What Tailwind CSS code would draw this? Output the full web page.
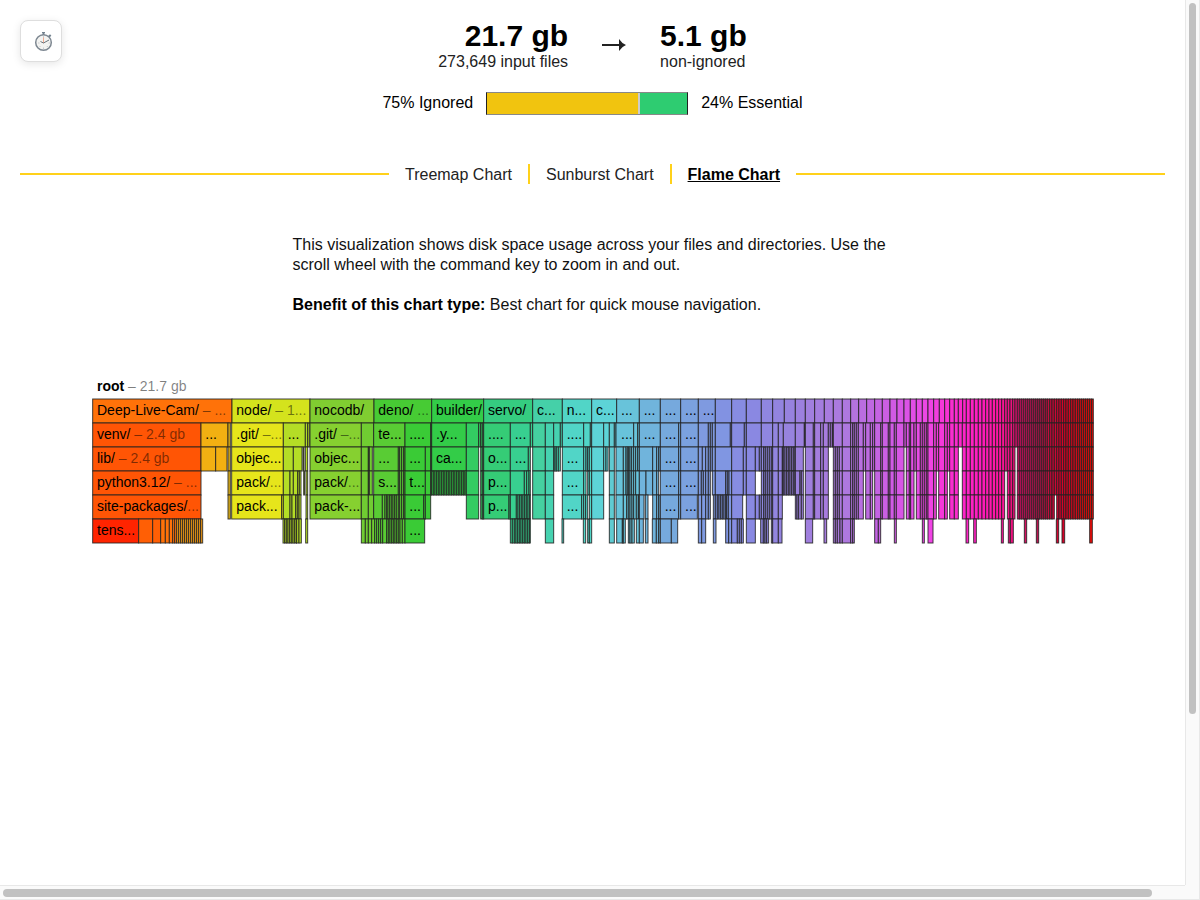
<!DOCTYPE html>
<html lang="en">
<head>
<meta charset="utf-8">
<title>Disk usage – Flame Chart</title>
<script src="https://cdn.jsdelivr.net/npm/@tailwindcss/browser@4"></script>
</head>
<body class="bg-white text-black">
<div class="grid h-screen grid-cols-[1fr_15px] grid-rows-[1fr_15px] font-['Liberation_Sans',Arial,sans-serif] text-base leading-5">
  <main class="relative overflow-hidden p-5">
    <button type="button" aria-label="Timing" class="absolute left-5 top-5 flex size-[42px] items-center justify-center rounded-lg border border-[#dedede] bg-white pl-1.5 shadow-[0_2px_8px_rgba(0,0,0,0.1)]">
      <svg class="h-[21px] w-5" viewBox="0 0 20 21" fill="none" aria-hidden="true">
        <path d="M9.5 1v3M14.5 6l2.2-2" stroke="#71808d" stroke-width="2"/>
        <path d="M8 1.5h3" stroke="#71808d" stroke-width="1"/>
        <circle cx="9.5" cy="11.5" r="7.8" fill="#f3f3f1" stroke="#7d8791" stroke-width="1.5"/>
        <path d="M9.5 5v2M16 12h-1.5M4 12h1.5M9.5 18v-1.5M5.5 16l1-1M13.8 16l-1-1" stroke="#c9cbce"/>
        <path d="M9.5 12V6.5" stroke="#f0aa91"/>
        <path d="M6.5 10.5l3 1.5 5.5-3" stroke="#68737c"/>
      </svg>
    </button>

    <header class="flex flex-col items-center">
      <div class="flex items-center gap-[34px]">
        <div class="text-right">
          <div class="text-[30px] leading-8 font-bold">21.7 gb</div>
          <div class="text-[#222]">273,649 input files</div>
        </div>
        <svg class="h-[14px] w-6" viewBox="0 0 24 14" fill="#222" aria-hidden="true"><path d="M0 5h17V0q3 4.500 7 6-4 1.500-7 6V7H0z"/></svg>
        <div>
          <div class="text-[30px] leading-8 font-bold">5.1 gb</div>
          <div class="text-[#222]">non-ignored</div>
        </div>
      </div>
      <div class="mt-5 flex items-start gap-[13px]">
        <span class="pt-px">75% Ignored</span>
        <div class="flex h-[23px] w-[202px] border border-x-[#222] border-y-[#888] bg-[#2ecc71]">
          <div class="border-r-2 border-[#ccc] bg-[#f1c40f]" style="width:76.5%"></div>
        </div>
        <span class="pt-px">24% Essential</span>
      </div>
    </header>

    <nav class="mt-12 flex items-center gap-4 text-[#222]">
      <span class="h-[2px] flex-1 bg-[#ffd11a]"></span>
      <button type="button" class="pt-0.5">Treemap Chart</button>
      <span class="h-5 w-[2px] bg-[#ffd11a]"></span>
      <button type="button" class="pt-0.5">Sunburst Chart</button>
      <span class="h-5 w-[2px] bg-[#ffd11a]"></span>
      <button type="button" class="pt-0.5 font-bold text-black underline">Flame Chart</button>
      <span class="h-[2px] flex-1 bg-[#ffd11a]"></span>
    </nav>

    <section class="mx-auto mt-[50px] max-w-[600px] text-[#111]">
      <p>This visualization shows disk space usage across your files and directories. Use the scroll wheel with the command key to zoom in and out.</p>
      <p class="mt-5"><b class="text-black">Benefit of this chart type:</b> Best chart for quick mouse navigation.</p>
    </section>

    <svg id="flame" class="mx-auto mt-[59px] block w-[1003px] max-w-full" viewBox="273 0 3009 513" role="img" aria-label="Flame chart of disk usage"></svg>
  </main>
  <div class="border-x border-[#e8e8e8] bg-[#fafafa] px-[3px] pt-[3px]"><div class="h-[711px] max-h-full rounded-full bg-[#c1c1c1]"></div></div>
  <div class="border-y border-[#e8e8e8] bg-[#fafafa] py-[3px] pl-[3px]"><div class="h-2 w-[97.2%] rounded-full bg-[#c1c1c1]"></div></div>
  <div class="border-r border-b border-[#e8e8e8] bg-[#fafafa]"></div>
</div>

<script>
// Cell edges per depth. "|" separates runs, "a~b/s" fills a to b with slivers of width s.
const rows = [
 "278 696 930 1122 1295 1451 1598 1687 1775 1850 1918 1981 2042 2095 2146 2195 2239 2284 2318 2353 2386 2416 2444 2473 2500 2527",
 "278 603 684 691 | 695 850 916 923 928 | 930 1084 1121 1215 1292 1295 1399 1436 1442 1447 1451 1531 1591 1598 1636 1661 1681 1687 1751 1771 1775 1811 1828 1843 1848 1901 1913 1918 1981 2036 2042 2095 2125 2131 2137 2146 2191 2195 2233 2239 2284 2318 2335 2350 2386 2413 2416 2440 2444 2462 2470 2485 2491 2497 2500 2527",
 "278 603 647 681 | 684 691 | 695 850 880 906 | 909 912 | 916 923 | 930 1084 1105 1108 1117 | 1121 1195 1199 1205 1211 1215 1276 1292 1295 1399 1436 | 1442 1447 1451 1531 1585 1591 | 1598 1636 1661 1665 1669 1675 1681 | 1687 1751 1758 1763 1768 1775 1811 1818 1824 | 1828 1843 | 1848 1870 1878 1882 1886 1890 1895 1901 1907 1913 1918 1958 1970 1976 1981 2036 2042 2095 2107 2117 2125 2131 2137 2146 2195 2230 2239 2266 2278 2284 2291 2296 2302 2308 2314 2318 2335 2347 2350~2386/5 2410 | 2416 2440 2444 2462 2470 2485 | 2500 2506 2512 2518 2527",
 "278 603 | 684 691 | 695 850 870 880 893 898 903 | 911 914 | 918 923 | 930 1084 1105 1108 1117 | 1121 1195 1199 1205 1211 1215 1276 1292 1295~1399/5 1436 | 1442 1447 1451 1531 1573 1580 1587 1591 | 1598 1636 1661 | 1687 1751 1758 | 1763 1768 1775 1811 | 1828 1843 | 1848 1870 1878 1882 1886 1890 1895 1901 1907 1918 1938 1958 1970 1976 | 1981 2036 2042 2095 2104 2110 2117 2125 2131 | 2137 2146 2177 2182 2187 2195 2230 2239 2266 | 2284 2291 2296 2302 2308 2314 2318 2335 2347 2350~2386/5 2400 2404 2410 | 2416 2440 2444 2462 2470 2485 | 2500 2506 2512 2518 2527",
 "278 603 | 684 691 | 695 845 850 870 876 887 892 897 903 | 918 923 | 930 1084 1105 1121 1147 1155 1160 1164 1169 1174 1179 1184 1189 1195 1199 1205 1211 1215 1271 1276 1292 | 1399 1436 | 1442 1447 1451 1527 1531 1549~1591/5 | 1598 1636 1661 | 1687 1745 1751 1757 1763 | 1768 1775 1811 | 1828 1843 | 1848 1870 1880 1885 1890 1896 1901 1909 1915 1918 1932 | 1936 1944 | 1958 1970 1976 1981 2036 2042 2092 | 2095 2105 2117 2125 2131 | 2140 2146 2152~2180/5 2185 2195 2228 | 2239 2266 2278 2284 2291 2296 2302 2308 2314 2318 2335 2347 | 2386 2391 2396 2404 2410 | 2416 2440 2444 2462 2470 2485 | 2500 2506 2512 2518 2527",
 "278 416 458 482 496 508 518~608/6 | 849~890/5 897 904 | 917 923 | 1084 1096 1105 1115 1124 1130 1136 1142 1148 1160~1200/5 1207 1215 1274 | 1531 1537 1543 1548 1553~1591/5 | 1636 1661 | 1686 1691 | 1750 1757 | 1763 1768 1775 | 1828 1843 | 1850 1867 1870 1876 | 1885 1890 1896 1903 | 1909 1918 1930 | 1936 1944 | 1957 1969 1976 1981 2014 2033 | 2095 2105 2117 | 2140 2148 | 2177 2186 2195 2212 2218 2224 2230 | 2239 2266 | 2282 2290 2295 2300 2306 | 2314 2318 2335 2346 | 2416 2438 | 2472 2480 | 2500 2506 2512 2520 2527 2552 2558 2563 | 2624 2635 2642 | 2683 2689 | 2767 2773 | 2784 2799 | 2898 2906 | 2921 2929 | 3004 3010 | 3025 3031 3040 | 3073 3080 | 3109 3116 | 3169 3176 | 3186 3194 | 3269 3277"
];
const top1 = "2527 2552 2576 2600 2624 2647 2670 2691 2712 2731 2749 2767 2784 2801 2818 2834 2849 2863 2875 2888 2899";
const deeper = "2527 2552 2558 2563 2569 2575 2590 2597 2611 2618 2624 2642 2647 2665 2670 2683 2689 2712 2719 2728 2732 2742 2749 2761 2767 2773 2779 2784 2801 2809 2816 2834 2842 2849 2863 2875 2887 2899";
// Empty stretches: first depth, start, end
const gaps = [[3,2712,2719],[3,2875,2887],[3,3043,3049],[4,2590,2597],[4,2618,2624],[4,2742,2749],[4,2809,2816],[4,2842,2849],[4,2905,2911],[4,3014,3024],[5,3162,3168]];

const rowOne = [[278,'#ff7209'],[696,'#d4e31d'],[930,'#80cd31'],[1122,'#47cb34'],[1295,'#33cc48'],[1451,'#35cc80'],[1598,'#45d0a8'],[1687,'#51d5c7'],[1775,'#5dd3d7'],[1850,'#68c3da'],[1918,'#70b4dc'],[1981,'#76a9dd'],[2042,'#7ba1df'],[2095,'#7f9ae0'],[2146,'#8292e2']];
const lower = [[278,'#ff5505'],[603,'#f2b012'],[684,'#e0b21a'],[695,'#e6e51b'],[850,'#b4dd26'],[930,'#86d030'],[1084,'#70cc32'],[1121,'#59cc34'],[1215,'#3acb36'],[1295,'#33cc48'],[1399,'#33cc62'],[1451,'#35cc76'],[1531,'#38cf90'],[1598,'#45d0a0'],[1636,'#46d2b0'],[1687,'#51d5c7'],[1775,'#5dd3d7'],[1828,'#60cbd2'],[1848,'#68c3da'],[1918,'#70b4dc'],[1981,'#76a9dd'],[2042,'#7ba1df'],[2095,'#7f9ae0'],[2146,'#8096e2']];
const ramp = [[2146,130,146,226],[2260,138,136,226],[2360,150,131,222],[2440,162,126,222],[2540,174,120,222],[2640,198,98,226],[2720,220,82,230],[2790,240,68,228],[2860,250,44,206],[2940,255,28,190],[3000,255,20,160],[3060,225,15,105],[3120,180,20,75],[3180,215,0,45],[3240,205,12,20],[3290,255,10,0]];

function color(depth, a, b) {
  if (a >= 2190) {
    const x = (a + b) / 2;
    const i = Math.max(1, ramp.findIndex(s => s[0] > x));
    const p = ramp[i - 1], q = ramp[i], t = (x - p[0]) / (q[0] - p[0]);
    return 'rgb(' + [1, 2, 3].map(k => Math.round(p[k] + (q[k] - p[k]) * t)).join(',') + ')';
  }
  if (depth === 6 && a < 610) return a < 400 ? '#ff2400' : a < 480 ? '#ff5f05' : a < 530 ? '#ff7209' : '#f39a14';
  return (depth === 1 ? rowOne : lower).filter(s => s[0] <= a + 1).pop()[1];
}
function edges(text) {
  return text.trim().split(/\s+/).flatMap(tok => {
    const m = tok.match(/^(\d+)~(\d+)\/(\d+)$/);
    if (!m) return [+tok];
    const list = [];
    for (let x = +m[1]; x < +m[2]; x += +m[3]) list.push(x);
    return list.concat(+m[2]);
  });
}
const tail = [];
for (let x = 2911; x < 3276;) { tail.push(x); x += x < 3050 ? Math.max(7, Math.round(12 - (x - 2911) / 28)) : x < 3140 ? 6 : x < 3230 ? 7 : 6; }
tail.push(3280);

const svg = document.getElementById('flame');
const ns = 'http://www.w3.org/2000/svg';
function add(parent, tag, attrs, text) {
  const el = document.createElementNS(ns, tag);
  for (const k in attrs) el.setAttribute(k, attrs[k]);
  if (text) el.textContent = text;
  parent.appendChild(el);
  return el;
}
const cells = add(svg, 'g', { stroke: '#222', 'stroke-opacity': '0.85', 'stroke-width': 3 });
rows.forEach((row, r) => {
  const depth = r + 1;
  let text = row;
  if (depth < 6) text += ' ' + (depth === 1 ? top1 : deeper) + ' ' + tail.join(' ');
  text.split('|').forEach(run => {
    const e = edges(run);
    for (let i = 1; i < e.length; i++) {
      const a = e[i - 1], b = e[i], mid = (a + b) / 2;
      if (b <= a || gaps.some(g => depth >= g[0] && depth < 6 && mid > g[1] && mid < g[2])) continue;
      add(cells, 'rect', { x: a, y: 75 + 72 * r, width: b - a, height: 72, fill: color(depth, a, b) });
    }
  });
});

// Labels: depth, left edge, name, size
const labels = [
 [0,278,'root',' – 21.7 gb'],
 [1,278,'Deep-Live-Cam/',' – ...'],[1,696,'node/',' – 1...'],[1,930,'nocodb/',''],[1,1122,'deno/',' ...'],[1,1295,'builder/',''],[1,1451,'servo/',''],[1,1598,'c...',''],[1,1687,'n...',''],[1,1775,'c...',''],[1,1850,'...',''],[1,1918,'...',''],[1,1981,'...',''],[1,2042,'...',''],[1,2095,'...',''],
 [2,278,'venv/',' – 2.4 gb'],[2,603,'...',''],[2,696,'.git/',' –...'],[2,850,'...',''],[2,930,'.git/',' –...'],[2,1122,'te...',''],[2,1215,'....',''],[2,1295,'.y...',''],[2,1451,'....',''],[2,1531,'...',''],[2,1687,'....',''],[2,1850,'...',''],[2,1918,'...',''],[2,1981,'...',''],[2,2042,'...',''],
 [3,278,'lib/',' – 2.4 gb'],[3,696,'objec...',''],[3,930,'objec...',''],[3,1122,'...',''],[3,1215,'...',''],[3,1295,'ca...',''],[3,1451,'o...',''],[3,1531,'...',''],[3,1687,'...',''],[3,1981,'...',''],[3,2042,'...',''],
 [4,278,'python3.12/',' – ...'],[4,696,'pack/','...'],[4,930,'pack/','...'],[4,1122,'s...',''],[4,1215,'t...',''],[4,1451,'p...',''],[4,1687,'...',''],[4,1981,'...',''],[4,2042,'...',''],
 [5,278,'site-packages/','...'],[5,696,'pack...',''],[5,930,'pack-...',''],[5,1215,'...',''],[5,1451,'p...',''],[5,1687,'...',''],[5,1981,'...',''],[5,2042,'...',''],
 [6,278,'tens...',''],[6,1215,'...','']
];
const names = add(svg, 'g', { 'font-size': 42, fill: '#000' });
labels.forEach(([depth, x, name, size]) => {
  const t = add(names, 'text', { x: x + 13, y: 51 + 72 * depth, 'xml:space': 'preserve' });
  add(t, 'tspan', depth ? {} : { 'font-weight': 'bold' }, name);
  if (size) add(t, 'tspan', { 'fill-opacity': 0.5 }, size);
});
</script>
</body>
</html>
